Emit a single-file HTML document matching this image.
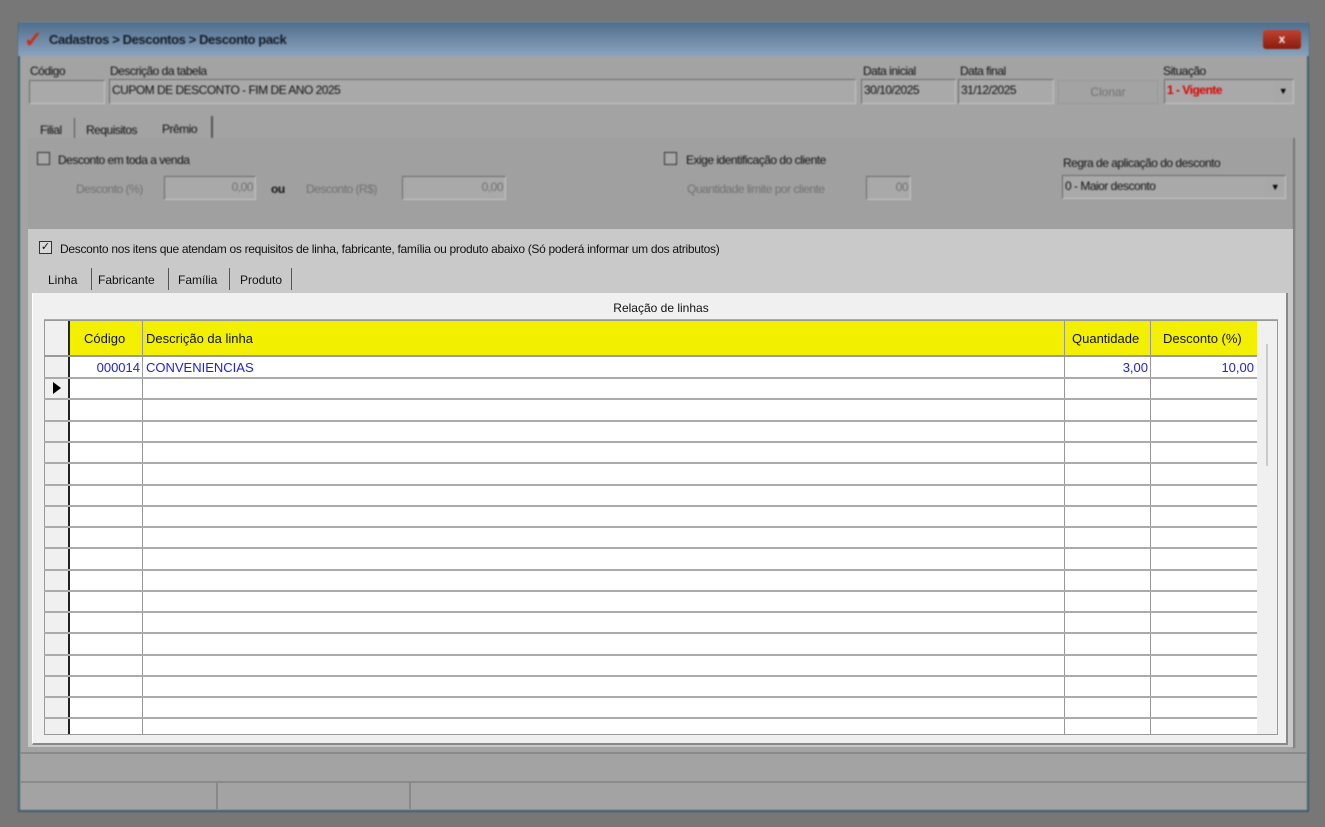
<!DOCTYPE html>
<html><head><meta charset="utf-8"><style>
*{box-sizing:border-box;margin:0;padding:0}
body{width:1325px;height:827px;background:#777;position:relative;overflow:hidden;font-family:"Liberation Sans",sans-serif;font-size:12px;color:#111}
.a{position:absolute}
.blur{filter:blur(0.8px)}
.blur .lbl,.blur .inp{letter-spacing:-0.5px}
.inp{position:absolute;background:#a9a9a9;border:1px solid #6a6a6a;border-right-color:#c4c4c4;border-bottom-color:#c4c4c4;font-size:12px;padding:3px 2px;line-height:14px;color:#111}
.lbl{position:absolute;font-size:12px;color:#111}
.dim{color:#707070}
.cb{position:absolute;width:13px;height:13px;border:1px solid #333;background:#a8a8a8}
.vline{position:absolute;width:1px;background:#999}
.hline{position:absolute;height:2px;background:#aaa;left:44px;width:1213px}
.g{font-size:13px}
</style></head><body>
<div class="a blur" style="left:18px;top:22px;width:1291px;height:790px;background:#a3a3a3;border:2px solid #3d5f6e;border-top:none;border-radius:4px 4px 0 0">
</div>
<div class="a blur" style="left:18px;top:22px;width:1291px;height:34px;background:linear-gradient(#4e6d8c,#8aa3bd);border-radius:5px 5px 0 0"></div>
<div class="a blur" style="left:24px;top:27px;font-size:22px;color:#d42a10;font-weight:bold">✓</div>
<div class="a blur" style="left:49px;top:32px;font-size:13px;font-weight:bold;color:#141c26;letter-spacing:-0.4px">Cadastros &gt; Descontos &gt; Desconto pack</div>
<div class="a blur" style="left:1263px;top:30px;width:38px;height:19px;background:linear-gradient(#c0412e,#8a1a0e);border-radius:3px;color:#eee;text-align:center;font-size:12px;line-height:18px;font-weight:bold">x</div>

<div class="blur">
<div class="lbl" style="left:30px;top:64px">Código</div>
<div class="lbl" style="left:110px;top:64px">Descrição da tabela</div>
<div class="lbl" style="left:863px;top:64px">Data inicial</div>
<div class="lbl" style="left:960px;top:64px">Data final</div>
<div class="lbl" style="left:1163px;top:64px">Situação</div>
<div class="inp" style="left:29px;top:80px;width:76px;height:24px"></div>
<div class="inp" style="left:109px;top:79px;width:747px;height:25px">CUPOM DE DESCONTO - FIM DE ANO 2025</div>
<div class="inp" style="left:861px;top:79px;width:95px;height:25px">30/10/2025</div>
<div class="inp" style="left:958px;top:79px;width:96px;height:25px">31/12/2025</div>
<div class="a dim" style="left:1058px;top:80px;width:100px;height:24px;border:1px solid #999;text-align:center;line-height:22px">Clonar</div>
<div class="inp" style="left:1164px;top:79px;width:130px;height:25px;color:#d00;font-weight:bold">1 - Vigente<span style="position:absolute;right:1px;top:1px;width:18px;height:21px;background:#a8a8a8;color:#000;font-size:9px;text-align:center;line-height:20px">▼</span></div>

<div class="lbl" style="left:40px;top:123px">Filial</div>
<div class="a" style="left:74px;top:118px;width:1px;height:20px;background:#555"></div>
<div class="lbl" style="left:86px;top:123px">Requisitos</div>
<div class="lbl" style="left:162px;top:122px">Prêmio</div>
<div class="a" style="left:211px;top:116px;width:2px;height:22px;background:#555"></div>
<div class="a" style="left:28px;top:138px;width:1268px;height:91px;background:#a0a0a0"></div>
<div class="a" style="left:1293px;top:138px;width:2px;height:610px;background:#777"></div>
<div class="cb" style="left:37px;top:152px"></div>
<div class="lbl" style="left:58px;top:153px">Desconto em toda a venda</div>
<div class="lbl dim" style="left:76px;top:182px">Desconto (%)</div>
<div class="inp dim" style="left:164px;top:176px;width:92px;height:24px;text-align:right">0,00</div>
<div class="lbl" style="left:271px;top:182px;font-weight:bold">ou</div>
<div class="lbl dim" style="left:306px;top:182px">Desconto (R$)</div>
<div class="inp dim" style="left:402px;top:176px;width:104px;height:24px;text-align:right">0,00</div>
<div class="cb" style="left:664px;top:152px"></div>
<div class="lbl" style="left:686px;top:153px">Exige identificação do cliente</div>
<div class="lbl dim" style="left:687px;top:182px">Quantidade limite por cliente</div>
<div class="inp dim" style="left:866px;top:176px;width:45px;height:24px;text-align:right">00</div>
<div class="lbl" style="left:1063px;top:156px">Regra de aplicação do desconto</div>
<div class="inp" style="left:1062px;top:175px;width:224px;height:24px">0 - Maior desconto<span style="position:absolute;right:1px;top:1px;width:18px;height:20px;background:#a8a8a8;color:#000;font-size:9px;text-align:center;line-height:20px">▼</span></div>
</div>

<div class="a" style="left:28px;top:229px;width:1265px;height:518px;background:#c9c9c9"></div>
<div class="a" style="left:39px;top:241px;width:13px;height:13px;border:1px solid #333;background:#d8d8d8;font-size:11px;line-height:11px;text-align:center">✓</div>
<div class="lbl" style="left:60px;top:242px;letter-spacing:-0.3px">Desconto nos itens que atendam os requisitos de linha, fabricante, família ou produto abaixo (Só poderá informar um dos atributos)</div>
<div class="lbl" style="left:48px;top:273px">Linha</div>
<div class="a" style="left:91px;top:268px;width:1px;height:22px;background:#555"></div>
<div class="lbl" style="left:98px;top:273px">Fabricante</div>
<div class="a" style="left:168px;top:268px;width:1px;height:22px;background:#555"></div>
<div class="lbl" style="left:178px;top:273px">Família</div>
<div class="a" style="left:229px;top:268px;width:1px;height:22px;background:#555"></div>
<div class="lbl" style="left:240px;top:273px">Produto</div>
<div class="a" style="left:291px;top:268px;width:1px;height:22px;background:#555"></div>

<div class="a" style="left:32px;top:293px;width:1256px;height:452px;background:#f0f0f0;border-right:2px solid #888;border-bottom:2px solid #888;border-left:1px solid #fff"></div>
<div class="a" style="left:44px;top:296px;width:1234px;height:24px;border-bottom:1px solid #aaa;text-align:center;font-size:12px;line-height:24px">Relação de linhas</div>
<div class="a" style="left:44px;top:320px;width:1234px;height:415px;background:#fff;border:1px solid #999"></div>
<div class="a" style="left:45px;top:321px;width:24px;height:413px;background:#f0f0f0"></div>
<div class="a" style="left:68px;top:321px;width:2px;height:413px;background:#222"></div>
<div class="a" style="left:70px;top:321px;width:1187px;height:34px;background:#f2f000"></div>
<div class="a" style="left:1257px;top:321px;width:20px;height:413px;background:#f0f0f0"></div>
<div class="a" style="left:1266px;top:344px;width:2px;height:122px;background:#ccc"></div>
<div class="vline" style="left:142px;top:321px;height:413px"></div>
<div class="vline" style="left:1064px;top:321px;height:413px"></div>
<div class="vline" style="left:1150px;top:321px;height:413px"></div>
<div class="a g" style="left:84px;top:331px">Código</div>
<div class="a g" style="left:146px;top:331px">Descrição da linha</div>
<div class="a g" style="left:1072px;top:331px">Quantidade</div>
<div class="a g" style="left:1163px;top:331px">Desconto (%)</div>
<div class="hline" style="top:355px;background:#999"></div>
<div class="a g" style="left:70px;top:360px;width:70px;text-align:right;color:#2020e0">000014</div>
<div class="a g" style="left:146px;top:360px;color:#2020e0">CONVENIENCIAS</div>
<div class="a g" style="left:1064px;top:360px;width:84px;text-align:right;color:#2020e0">3,00</div>
<div class="a g" style="left:1150px;top:360px;width:104px;text-align:right;color:#2020e0">10,00</div>
<div class="a" style="left:53px;top:382px;width:0;height:0;border-left:8px solid #000;border-top:6px solid transparent;border-bottom:6px solid transparent"></div>
<div class="hline" style="top:377px"></div><div class="hline" style="top:398px"></div><div class="hline" style="top:420px"></div><div class="hline" style="top:441px"></div><div class="hline" style="top:462px"></div><div class="hline" style="top:484px"></div><div class="hline" style="top:505px"></div><div class="hline" style="top:526px"></div><div class="hline" style="top:547px"></div><div class="hline" style="top:569px"></div><div class="hline" style="top:590px"></div><div class="hline" style="top:611px"></div><div class="hline" style="top:632px"></div><div class="hline" style="top:654px"></div><div class="hline" style="top:675px"></div><div class="hline" style="top:696px"></div><div class="hline" style="top:717px"></div>

<div class="a" style="left:20px;top:752px;width:1287px;height:2px;background:#8a8a8a"></div>
<div class="a" style="left:20px;top:781px;width:1287px;height:2px;background:#8a8a8a"></div>
<div class="a" style="left:216px;top:783px;width:2px;height:26px;background:#888"></div>
<div class="a" style="left:409px;top:783px;width:2px;height:26px;background:#888"></div>
</body></html>
